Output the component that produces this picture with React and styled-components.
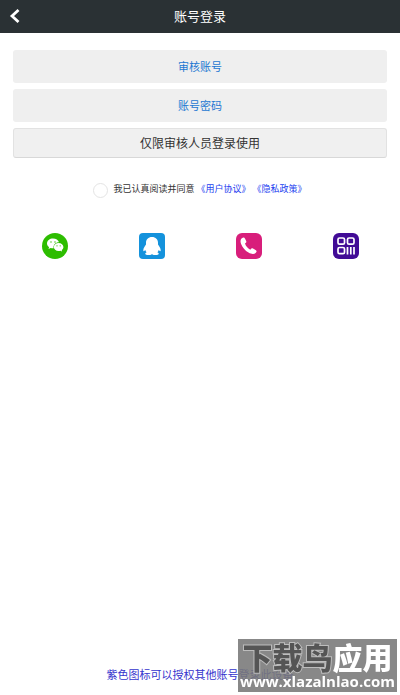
import React from "react";
import styled, { createGlobalStyle } from "styled-components";

const GlobalStyle = createGlobalStyle`
  *, *::before, *::after { box-sizing: border-box; }
  html, body { margin: 0; background: #fff; }
  body, input, button {
    font-family: "Noto Sans CJK SC", "Noto Sans", sans-serif;
  }
`;

const Page = styled.div`
  display: flex;
  flex-direction: column;
  min-height: 100vh;
`;

const Header = styled.header`
  display: grid;
  grid-template-columns: 30px 1fr 30px;
  align-items: center;
  height: 33px;
  padding-bottom: 1px;
  background: #2a3134;
  color: #fff;
`;

const BackButton = styled.button`
  display: flex;
  align-items: center;
  justify-content: center;
  height: 32px;
  padding: 0;
  border: 0;
  background: none;
  color: inherit;
`;

const Title = styled.h1`
  margin: 0;
  font-size: 13px;
  line-height: 30px;
  font-weight: 400;
  text-align: center;
`;

const Form = styled.form`
  display: flex;
  flex-direction: column;
  gap: 6px;
  padding: 17px 13px 0;
`;

const Field = styled.input`
  width: 100%;
  height: 33px;
  padding: 0 12px 2px;
  border: 0;
  border-radius: 3px;
  background: #efefef;
  color: #1e78d2;
  font-size: 11px;
  text-align: center;
  &::placeholder { color: #1e78d2; opacity: 1; }
`;

const SubmitButton = styled.button`
  height: 30px;
  padding: 0 0 2px;
  border: 1px solid #e2e2e2;
  border-bottom-color: #d8d8d8;
  border-radius: 3px;
  background: #f0f0f0;
  color: #333;
  font-size: 12px;
`;

const Agreement = styled.div`
  display: flex;
  justify-content: center;
  align-items: center;
  gap: 5px;
  margin-top: 17px;
  color: #333;
  font-size: 9px;
  line-height: 16px;
`;

const Checkbox = styled.input`
  appearance: none;
  width: 15px;
  height: 15px;
  margin: 0;
  border: 1px solid #e4e4e4;
  border-radius: 50%;
  background: #fff;
  &:checked { background: #1e78d2; }
`;

const AgreementText = styled.div`
  display: flex;
  gap: 2px;
  padding-bottom: 2px;
`;

const PolicyLink = styled.a`
  color: #2340f0;
  text-decoration: none;
`;

const LoginMethods = styled.nav`
  display: grid;
  grid-template-columns: repeat(4, 1fr);
  justify-items: center;
  margin-top: 34px;
  padding: 0 6px;
`;

const MethodButton = styled.button`
  display: flex;
  align-items: center;
  justify-content: center;
  width: 26px;
  height: 26px;
  padding: 0;
  border: 0;
  border-radius: ${(p) => p.$radius};
  background: ${(p) => p.$color};
`;

const Footer = styled.footer`
  margin-top: auto;
  padding-bottom: 13px;
  color: #3434cd;
  font-size: 11px;
  line-height: 16px;
  text-align: center;
`;

const Watermark = styled.div`
  position: fixed;
  right: 3px;
  bottom: 3px;
  display: flex;
  flex-direction: column;
  align-items: center;
  width: 159px;
  height: 53px;
  background: rgba(120, 120, 120, 0.88);
  color: #fff;
  white-space: nowrap;
`;

const WatermarkName = styled.div`
  font-size: 30px;
  line-height: 35px;
  font-weight: 900;
`;

const Outlined = styled.span`
  color: #555;
  -webkit-text-stroke: 2px #bdbdbd;
  paint-order: stroke fill;
`;

const WatermarkUrl = styled.div`
  font-family: "Open Sans", sans-serif;
  font-size: 15px;
  line-height: 14px;
  font-weight: 700;
`;

function WechatIcon() {
  return (
    <svg width="26" height="26" viewBox="0 0 26 26" aria-hidden="true">
      <path fill="#fff" d="M11 5.500c-3.300 0-6 2.100-6 4.900 0 1.500.8 2.800 2.100 3.700l-.6 2 2.200-1.200c.7.2 1.500.3 2.300.3h.6c-.7-3.400 2.100-6.100 5.400-6-.6-2.200-3.100-3.700-6-3.700Z" />
      <path fill="#fff" d="M16.600 9.900c-2.700 0-4.800 1.700-4.800 4s2.100 4 4.800 4c.6 0 1.200-.1 1.700-.2l1.800.9-.4-1.600c1-.8 1.700-1.900 1.700-3.100 0-2.300-2.100-4-4.800-4Z" />
      <g fill="#2dbd00">
        <circle cx="9" cy="9" r=".7" /><circle cx="13" cy="9" r=".7" />
        <circle cx="15" cy="12.800" r=".6" /><circle cx="18.200" cy="12.800" r=".6" />
      </g>
    </svg>
  );
}

function QqIcon() {
  return (
    <svg width="26" height="26" viewBox="0 0 26 26" aria-hidden="true">
      <path fill="#fff" d="M13 4C9.300 4 7 6.500 7 9.700v1.800C5.600 13.300 4.300 15.500 4.300 17.200c0 1.500.9 1.200 2-.1.2.9.6 1.500 1.300 2.100-.9.4-1.400.9-1.400 1.500 0 1.700 5.200 1.700 6.800.5 1.600 1.200 6.800 1.200 6.800-.5 0-.6-.5-1.100-1.400-1.500.7-.6 1.100-1.200 1.300-2.100 1.100 1.300 2 1.600 2 .1 0-1.700-1.300-3.900-2.700-5.700V9.700C19 6.500 16.700 4 13 4Z" />
    </svg>
  );
}

function PhoneIcon() {
  return (
    <svg width="26" height="26" viewBox="0 0 26 26" aria-hidden="true">
      <path fill="#fff" d="M5.900 5.200c1.400-1 2.500-.8 3.300.7l1 2.100c.5 1.100-.1 1.800-1.200 2.500.9 2.700 2.700 4.900 5.300 6.200 1-1.200 1.700-1.700 2.700-1.100l2.600 1.400c1.300.8 1.300 1.700.2 2.800-1.700 1.700-4.300 1.500-7.300-.3-3.400-2-6.100-5.100-7.400-8.600C4.100 8.500 4.400 6.400 5.900 5.200Z" />
    </svg>
  );
}

function CodeIcon() {
  return (
    <svg width="26" height="26" viewBox="0 0 26 26" fill="none" stroke="#fff" strokeWidth="1.700" aria-hidden="true">
      <rect x="5" y="5" width="6.500" height="6.200" rx="1.500" />
      <rect x="14.500" y="5" width="6.500" height="6.200" rx="1.500" />
      <rect x="5" y="14.500" width="6.500" height="6.200" rx="1.500" />
      <path d="M14.500 14v7.400M17.800 14v7.400M21 14v7.400" />
    </svg>
  );
}

const methods = [
  { label: "微信登录", color: "#2dbd00", radius: "50%", Icon: WechatIcon },
  { label: "QQ登录", color: "#1492dc", radius: "4px", Icon: QqIcon },
  { label: "手机登录", color: "#d81e7b", radius: "6px", Icon: PhoneIcon },
  { label: "授权登录", color: "#410b96", radius: "6px", Icon: CodeIcon },
];

export default function App() {
  return (
    <Page>
      <GlobalStyle />
      <Header>
        <BackButton type="button" aria-label="返回">
          <svg width="12" height="16" viewBox="0 0 12 16" fill="none" stroke="currentColor" strokeWidth="2.800" aria-hidden="true">
            <path d="M9.500 2 3 8l6.500 6" />
          </svg>
        </BackButton>
        <Title>账号登录</Title>
      </Header>
      <main>
        <Form onSubmit={(e) => e.preventDefault()}>
          <Field type="text" placeholder="审核账号" aria-label="审核账号" />
          <Field type="password" placeholder="账号密码" aria-label="账号密码" />
          <SubmitButton type="submit">仅限审核人员登录使用</SubmitButton>
          <Agreement>
            <Checkbox id="agree" type="checkbox" />
            <AgreementText>
              <label htmlFor="agree">我已认真阅读并同意</label>
              <PolicyLink href="#terms">《用户协议》</PolicyLink>
              <PolicyLink href="#privacy">《隐私政策》</PolicyLink>
            </AgreementText>
          </Agreement>
        </Form>
        <LoginMethods>
          {methods.map(({ label, color, radius, Icon }) => (
            <MethodButton key={label} type="button" aria-label={label} $color={color} $radius={radius}>
              <Icon />
            </MethodButton>
          ))}
        </LoginMethods>
      </main>
      <Footer>紫色图标可以授权其他账号登录此设备</Footer>
      <Watermark>
        <WatermarkName><Outlined>下载鸟</Outlined>应用</WatermarkName>
        <WatermarkUrl>www.xlazalnlao.com</WatermarkUrl>
      </Watermark>
    </Page>
  );
}
